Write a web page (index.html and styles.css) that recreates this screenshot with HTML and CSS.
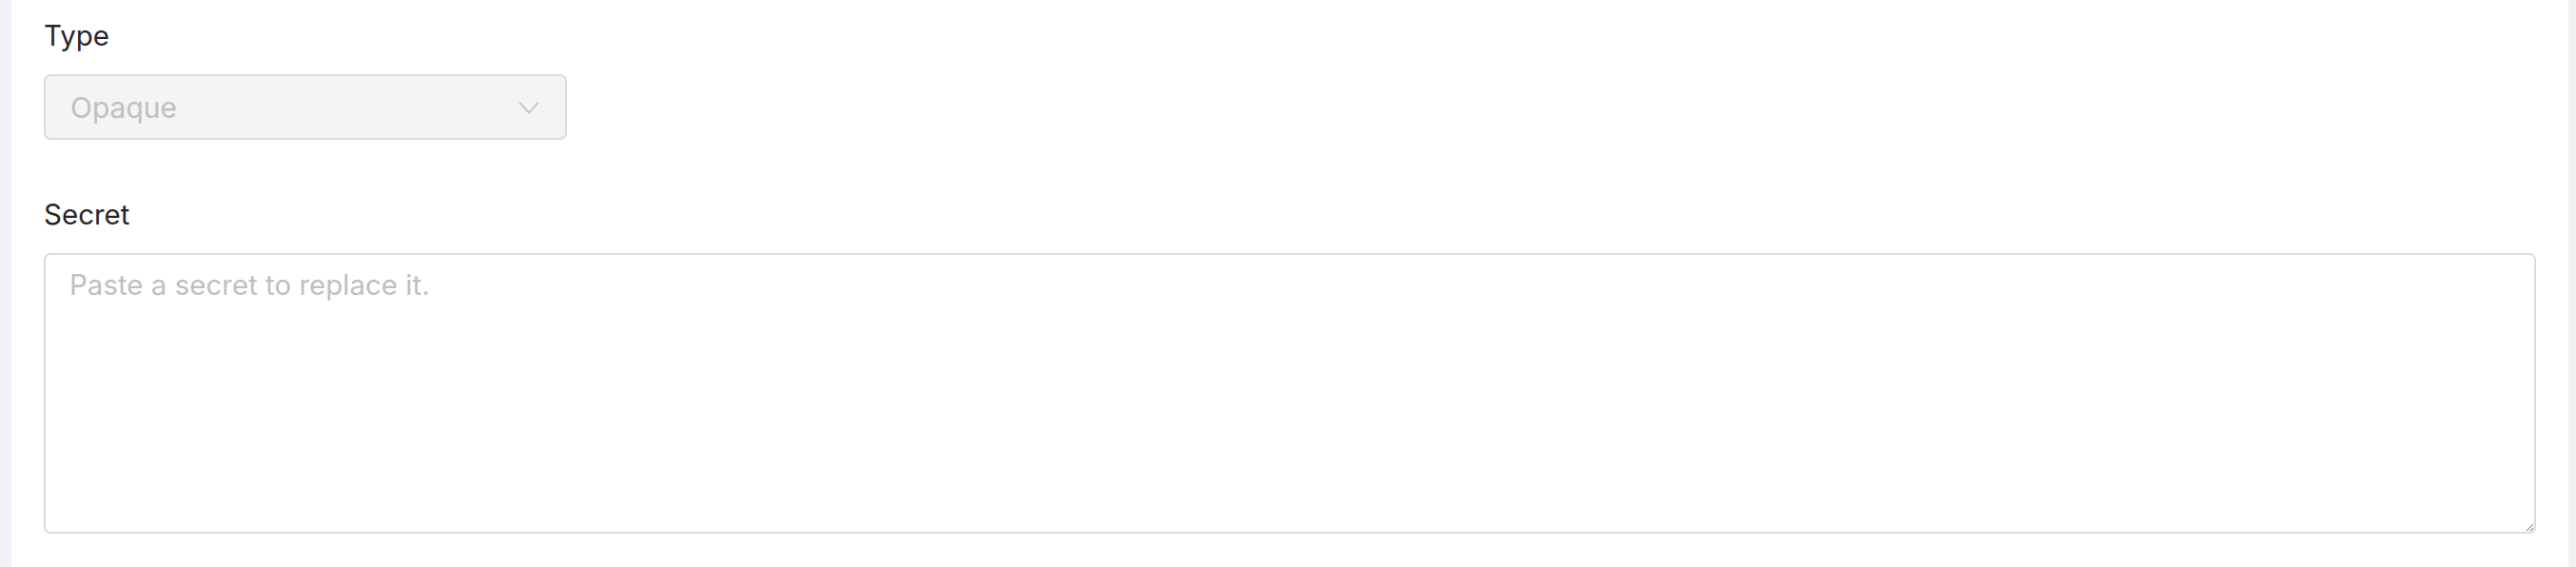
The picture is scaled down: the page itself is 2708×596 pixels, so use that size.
FILE: index.html
```html
<!DOCTYPE html>
<html lang="en">
<head>
  <meta charset="UTF-8" />
  <meta name="viewport" content="width=device-width, initial-scale=1.0"/>
  <title>Edit secret</title>
  <link rel="stylesheet" href="styles.css">
</head>
<body>
  <div class="page">
    <main class="panel">
      <form class="secret-form">
        <div class="field">
          <label class="field-label" for="type">Type</label>
          <div class="select is-disabled" id="type">
            <span class="select-value">Opaque</span>
            <svg class="select-arrow" width="22" height="14" viewBox="0 0 22 14" fill="none">
              <path d="M1 1.5 L11 12.5 L21 1.5" stroke="#bfbfbf" stroke-width="1.7"/>
            </svg>
          </div>
        </div>

        <div class="field">
          <label class="field-label" for="secret">Secret</label>
          <textarea id="secret" class="textarea" placeholder="Paste a secret to replace it."></textarea>
        </div>
      </form>
    </main>
  </div>
</body>
</html>
```

FILE: styles.css
```css
html, body {
  margin: 0;
  height: 100%;
}

body {
  font-family: Inter, "Liberation Sans", sans-serif;
  background: #f0f2f5;
  color: #262626;
}

.page {
  display: flex;
  height: 100%;
  padding: 0 8px 0 12px;
  box-sizing: border-box;
}

.panel {
  flex: 1;
  background: #fff;
  padding: 16px 34px 0 34px;
}

.field {
  display: flex;
  flex-direction: column;
  gap: 20px;
  margin-bottom: 57px;
}

.field-label {
  font-size: 29.5px;
  line-height: 42px;
  color: #262626;
}

.select {
  width: 550px;
  height: 69px;
  box-sizing: border-box;
  display: flex;
  align-items: center;
  justify-content: space-between;
  padding: 0 27px 0 26px;
  border: 2px solid #dcdcdc;
  border-radius: 7px;
  background: #f4f4f4;
  font-size: 30px;
  color: #bfbfbf;
}

.select-arrow {
  flex: none;
}

.textarea {
  width: 100%;
  height: 295px;
  box-sizing: border-box;
  padding: 10px 25px;
  border: 2px solid #dcdcdc;
  border-radius: 7px;
  font-family: inherit;
  font-size: 29.5px;
  line-height: 42px;
  color: #262626;
  resize: vertical;
  outline: none;
}

.textarea::placeholder {
  color: #bfbfbf;
}
```
